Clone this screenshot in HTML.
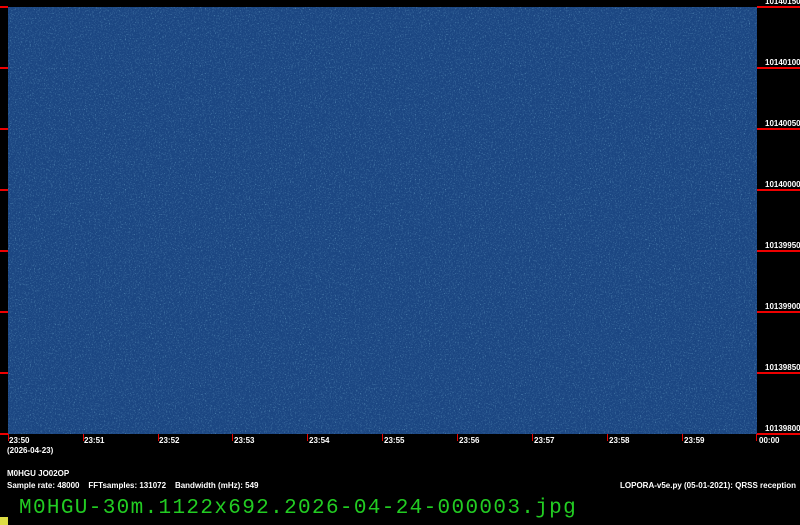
<!DOCTYPE html>
<html><head><meta charset="utf-8"><style>
html,body{margin:0;padding:0;background:#000;width:800px;height:525px;overflow:hidden;position:relative;font-family:"Liberation Sans",sans-serif}
.plot{position:absolute;left:8px;top:7px;width:749px;height:427px;background:#1b4682}
.r{position:absolute;background:#e00;height:2px}
.fl{position:absolute;left:765px;color:#fff;font-size:8px;font-weight:bold}
.t{position:absolute;top:434px;width:1px;height:7px;background:#e00}
.tl{position:absolute;top:436px;color:#fff;font-size:8px;font-weight:bold}
.w{position:absolute;color:#fff;font-size:8px;font-weight:bold;left:7px}
</style></head><body>
<div class="plot"><svg width="749" height="427" style="position:absolute;left:0;top:0">
<filter id="n" x="0" y="0" width="100%" height="100%"><feTurbulence type="fractalNoise" baseFrequency="0.7" numOctaves="1" seed="3"/><feColorMatrix type="matrix" values="0 0 0 0 0.05  0 0 0 0 0.15  0 0 0 0 0.35  -2 0 0 0 1.0"/></filter>
<filter id="m" x="0" y="0" width="100%" height="100%"><feTurbulence type="fractalNoise" baseFrequency="0.8" numOctaves="1" seed="9"/><feColorMatrix type="matrix" values="0 0 0 0 0.2  0 0 0 0 0.5  0 0 0 0 0.7  3 0 0 0 -1.8"/></filter>
<rect width="749" height="427" filter="url(#n)" opacity="0.9"/>
<rect width="749" height="427" filter="url(#m)" opacity="0.9"/>
</svg></div>
<div class="r" style="left:757px;width:43px;top:6px"></div>
<div class="r" style="left:757px;width:43px;top:67px"></div>
<div class="r" style="left:757px;width:43px;top:128px"></div>
<div class="r" style="left:757px;width:43px;top:189px"></div>
<div class="r" style="left:757px;width:43px;top:250px"></div>
<div class="r" style="left:757px;width:43px;top:311px"></div>
<div class="r" style="left:757px;width:43px;top:372px"></div>
<div class="r" style="left:757px;width:43px;top:433px"></div>
<div class="r" style="left:0;width:8px;top:6px"></div>
<div class="r" style="left:0;width:8px;top:67px"></div>
<div class="r" style="left:0;width:8px;top:128px"></div>
<div class="r" style="left:0;width:8px;top:189px"></div>
<div class="r" style="left:0;width:8px;top:250px"></div>
<div class="r" style="left:0;width:8px;top:311px"></div>
<div class="r" style="left:0;width:8px;top:372px"></div>
<div class="r" style="left:0;width:8px;top:433px"></div>
<div class="fl" style="top:-3px">10140150</div>
<div class="fl" style="top:58px">10140100</div>
<div class="fl" style="top:119px">10140050</div>
<div class="fl" style="top:180px">10140000</div>
<div class="fl" style="top:241px">10139950</div>
<div class="fl" style="top:302px">10139900</div>
<div class="fl" style="top:363px">10139850</div>
<div class="fl" style="top:424px">10139800</div>
<div class="t" style="left:8px"></div><div class="tl" style="left:9px">23:50</div>
<div class="t" style="left:83px"></div><div class="tl" style="left:84px">23:51</div>
<div class="t" style="left:158px"></div><div class="tl" style="left:159px">23:52</div>
<div class="t" style="left:232px"></div><div class="tl" style="left:234px">23:53</div>
<div class="t" style="left:307px"></div><div class="tl" style="left:309px">23:54</div>
<div class="t" style="left:382px"></div><div class="tl" style="left:384px">23:55</div>
<div class="t" style="left:457px"></div><div class="tl" style="left:459px">23:56</div>
<div class="t" style="left:532px"></div><div class="tl" style="left:534px">23:57</div>
<div class="t" style="left:607px"></div><div class="tl" style="left:609px">23:58</div>
<div class="t" style="left:682px"></div><div class="tl" style="left:684px">23:59</div>
<div class="t" style="left:756px"></div><div class="tl" style="left:759px">00:00</div>
<div class="w" style="top:446px">(2026-04-23)</div>
<div class="w" style="top:469px">M0HGU JO02OP</div>
<div class="w" style="top:481px">Sample rate: 48000 &nbsp;&nbsp; FFTsamples: 131072 &nbsp;&nbsp; Bandwidth (mHz): 549</div>
<div class="w" style="top:481px;left:620px">LOPORA-v5e.py (05-01-2021): QRSS reception</div>
<div style="position:absolute;left:19px;top:497px;color:#22cc22;font-family:'Liberation Mono',monospace;font-size:21px;letter-spacing:1.35px;line-height:24px;white-space:nowrap">M0HGU-30m.1122x692.2026-04-24-000003.jpg</div>
<div style="position:absolute;left:0;top:517px;width:8px;height:8px;background:#dd4"></div>
</body></html>
